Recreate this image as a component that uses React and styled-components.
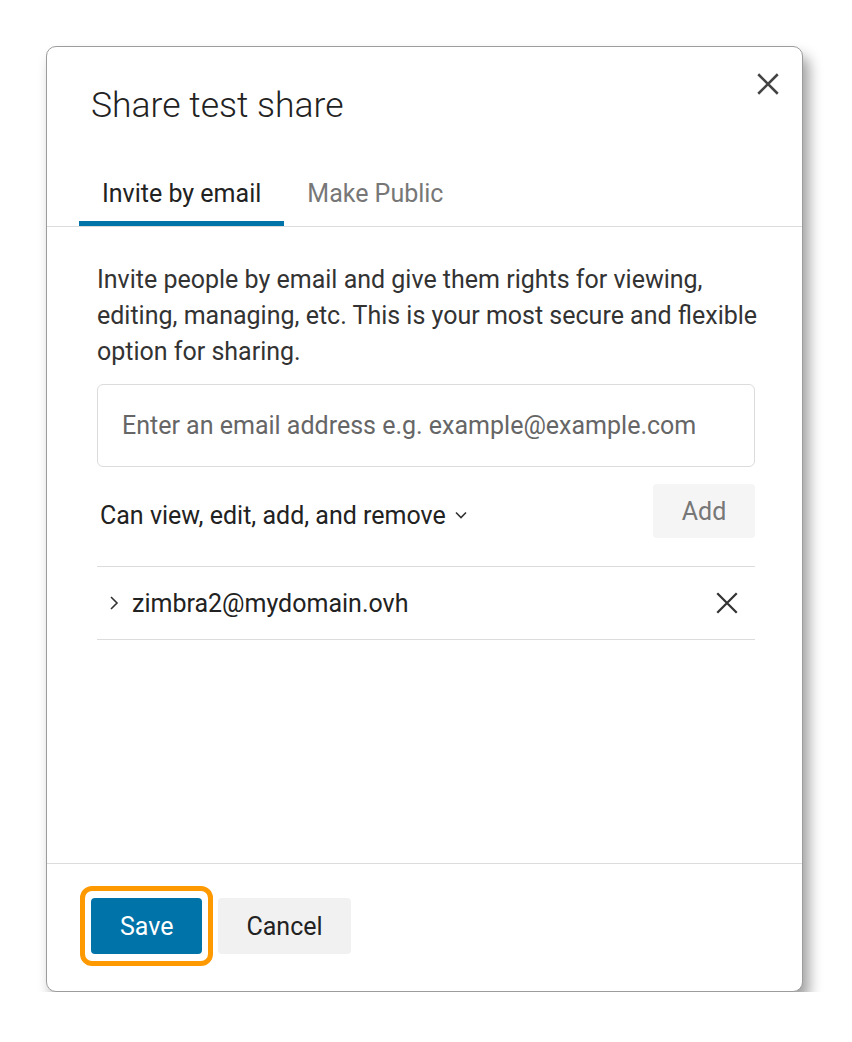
import styled, { createGlobalStyle } from "styled-components";

const Global = createGlobalStyle`
  html, body {
    margin: 0;
    padding: 0;
    background: #ffffff;
  }
  body {
    font-family: Roboto, "Noto Sans", "Liberation Sans", sans-serif;
    -webkit-font-smoothing: antialiased;
  }
`;

const Page = styled.div`
  padding: 46px 0 0 46px;
`;

const Dialog = styled.div`
  position: relative;
  box-sizing: border-box;
  width: 757px;
  height: 946px;
  background: #fff;
  border: 1px solid #9c9c9c;
  border-radius: 10px;
  box-shadow: 6px 10px 14px rgba(0, 0, 0, 0.38);
  display: flex;
  flex-direction: column;
`;

const Title = styled.h1`
  margin: 0;
  padding: 38px 0 0 44px;
  font-size: 35.5px;
  font-weight: 300;
  line-height: 40px;
  color: #222;
`;

const CloseButton = styled.button`
  position: absolute;
  top: 24px;
  right: 21px;
  width: 26px;
  height: 26px;
  padding: 0;
  border: 0;
  background: none;
  color: #444;
  cursor: pointer;
`;

const Tabs = styled.div`
  display: flex;
  margin-top: 49px;
  padding-left: 32px;
  border-bottom: 1px solid #dcdcdc;
`;

const Tab = styled.div`
  box-sizing: border-box;
  height: 52px;
  padding: 0 23px;
  line-height: 40px;
  font-size: 25px;
  color: ${({ $active }) => ($active ? "#222" : "#777")};
  border-bottom: 5px solid ${({ $active }) => ($active ? "#0073a8" : "transparent")};
`;

const Content = styled.div`
  flex: 1;
  padding: 35px 47px 0 50px;
`;

const Intro = styled.p`
  margin: 0 -14px 0 0;
  font-size: 25px;
  line-height: 36px;
  color: #333;
`;

const EmailInput = styled.input`
  display: block;
  box-sizing: border-box;
  width: 100%;
  height: 83px;
  margin-top: 14px;
  padding: 0 24px;
  border: 1px solid #dcdcdc;
  border-radius: 6px;
  font-family: inherit;
  font-size: 25px;
  color: #333;
  outline: none;

  &::placeholder {
    color: #666;
  }
`;

const PermissionRow = styled.div`
  display: flex;
  align-items: center;
  justify-content: space-between;
  margin-top: 17px;
  padding-bottom: 28px;
  border-bottom: 1px solid #dcdcdc;
`;

const PermissionSelect = styled.div`
  display: flex;
  align-items: center;
  gap: 8px;
  padding-left: 3px;
  margin-top: 8px;
  font-size: 25px;
  color: #222;
`;

const AddButton = styled.button`
  width: 102px;
  height: 54px;
  border: 0;
  border-radius: 4px;
  background: #f5f5f5;
  font-family: inherit;
  font-size: 25px;
  color: #777;
`;

const ShareRow = styled.div`
  display: flex;
  align-items: center;
  height: 72px;
  padding: 0 15px 0 10px;
  border-bottom: 1px solid #dcdcdc;
  font-size: 25px;
  color: #222;
`;

const Email = styled.span`
  flex: 1;
  margin-left: 11px;
`;

const IconButton = styled.button`
  display: flex;
  padding: 0;
  border: 0;
  background: none;
  color: #333;
`;

const Footer = styled.div`
  display: flex;
  gap: 16px;
  height: 128px;
  box-sizing: border-box;
  padding: 34px 0 0 44px;
  border-top: 1px solid #dcdcdc;
`;

const Button = styled.button`
  position: relative;
  height: 56px;
  padding: 0 ${({ $pad }) => $pad}px;
  border: 0;
  border-radius: 4px;
  font-family: inherit;
  font-size: 25px;
  background: ${({ $primary }) => ($primary ? "#0073a8" : "#f1f1f1")};
  color: ${({ $primary }) => ($primary ? "#fff" : "#222")};
  outline: none;

  /* focus ring */
  &::after {
    content: "";
    display: ${({ $focused }) => ($focused ? "block" : "none")};
    position: absolute;
    inset: -12px -11px;
    border: 5px solid #ff9900;
    border-radius: 12px;
  }
`;

const X = ({ size, stroke }) => (
  <svg width={size} height={size} viewBox="0 0 24 24" fill="none" stroke="currentColor" strokeWidth={stroke}>
    <path d="M3 3 L21 21 M21 3 L3 21" />
  </svg>
);

export default function App() {
  return (
    <>
      <Global />
      <Page>
        <Dialog>
          <Title>Share test share</Title>
          <CloseButton aria-label="Close">
            <X size={26} stroke={2.4} />
          </CloseButton>
          <Tabs>
            <Tab $active>Invite by email</Tab>
            <Tab>Make Public</Tab>
          </Tabs>
          <Content>
            <Intro>
              Invite people by email and give them rights for viewing, editing, managing, etc. This is your
              most secure and flexible option for sharing.
            </Intro>
            <EmailInput placeholder="Enter an email address e.g. example@example.com" />
            <PermissionRow>
              <PermissionSelect>
                Can view, edit, add, and remove
                <svg width="14" height="14" viewBox="0 0 14 14" fill="none" stroke="#333" strokeWidth="1.6">
                  <path d="M2 4.5 L7 9.5 L12 4.5" />
                </svg>
              </PermissionSelect>
              <AddButton>Add</AddButton>
            </PermissionRow>
            <ShareRow>
              <svg width="14" height="16" viewBox="0 0 14 16" fill="none" stroke="#333" strokeWidth="1.6">
                <path d="M4 2 L10 8 L4 14" />
              </svg>
              <Email>zimbra2@mydomain.ovh</Email>
              <IconButton aria-label="Remove">
                <X size={26} stroke={2.1} />
              </IconButton>
            </ShareRow>
          </Content>
          <Footer>
            <Button $primary $focused $pad={29}>Save</Button>
            <Button $pad={28}>Cancel</Button>
          </Footer>
        </Dialog>
      </Page>
    </>
  );
}
